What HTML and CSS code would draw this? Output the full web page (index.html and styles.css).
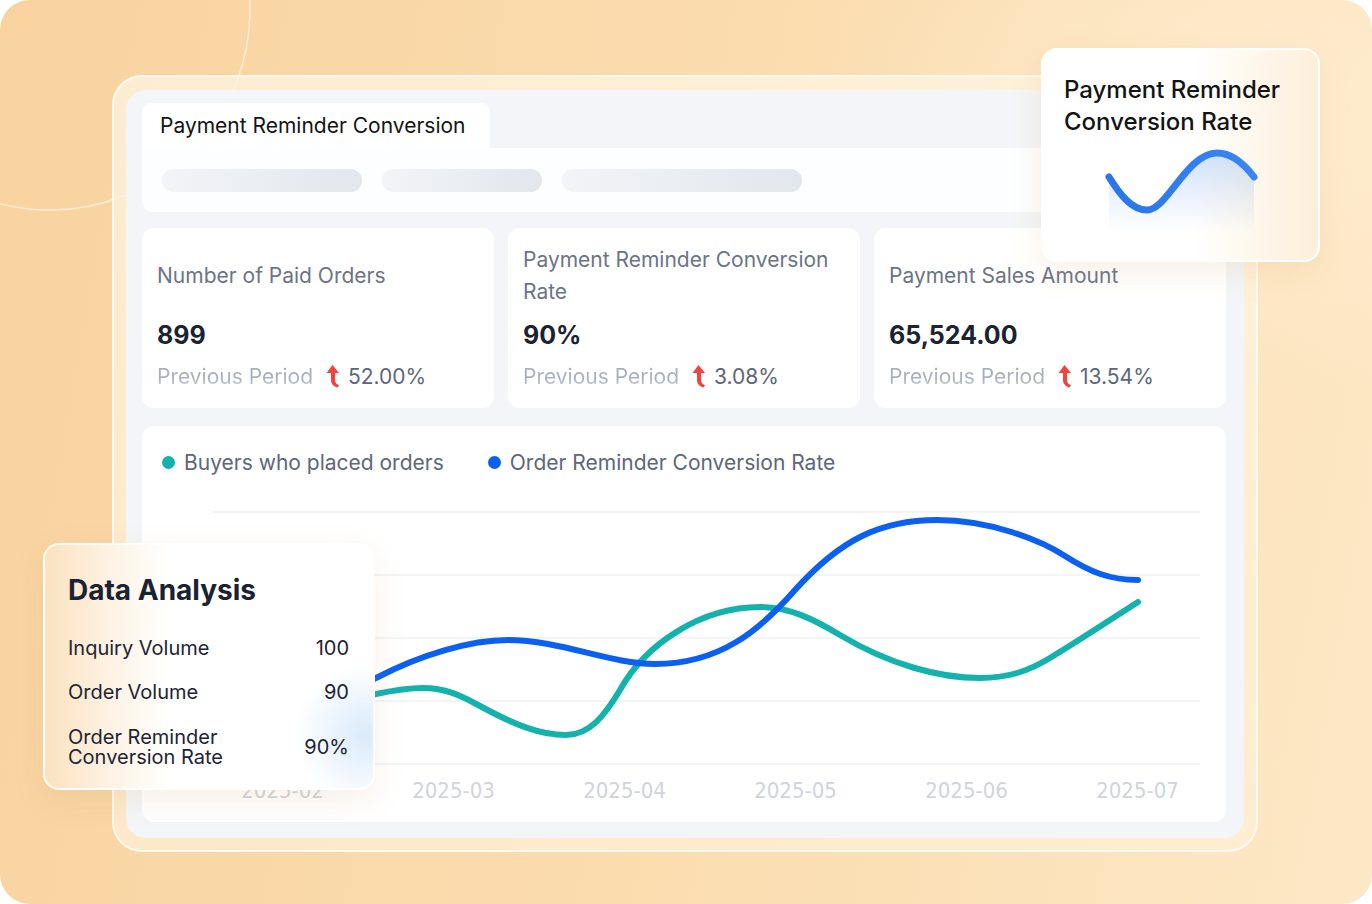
FILE: index.html
```html
<!DOCTYPE html>
<html lang="en">
<head>
<meta charset="utf-8">
<title>Payment Reminder Conversion</title>
<link rel="stylesheet" href="styles.css">
</head>
<body>
<div class="stage">
  <svg class="deco" width="1372" height="904" viewBox="0 0 1372 904">
    <circle cx="50" cy="10" r="200" fill="none" stroke="rgba(255,255,255,0.55)" stroke-width="1.5"/>
  </svg>

  <div class="frame">
    <div class="panel">
      <div class="tab">Payment Reminder Conversion</div>
      <div class="filters">
        <span class="pill pill-a"></span>
        <span class="pill pill-b"></span>
        <span class="pill pill-c"></span>
      </div>

      <div class="stats">
        <div class="stat">
          <div class="stat-title">Number of Paid Orders</div>
          <div class="stat-value">899</div>
          <div class="stat-prev">
            <span class="prev-label">Previous Period</span>
            <svg class="up" width="16" height="24" viewBox="0 0 16 24"><path d="M7.5 1 L14 9 L10 9 L10 16 C10 18.5 11.5 20 14 21.5 L12.5 23.5 C8 22 6 19.5 6 16 L6 9 L1.5 9 Z" fill="#f2443f"/></svg>
            <span class="prev-pct">52.00%</span>
          </div>
        </div>
        <div class="stat">
          <div class="stat-title">Payment Reminder Conversion Rate</div>
          <div class="stat-value">90%</div>
          <div class="stat-prev">
            <span class="prev-label">Previous Period</span>
            <svg class="up" width="16" height="24" viewBox="0 0 16 24"><path d="M7.5 1 L14 9 L10 9 L10 16 C10 18.5 11.5 20 14 21.5 L12.5 23.5 C8 22 6 19.5 6 16 L6 9 L1.5 9 Z" fill="#f2443f"/></svg>
            <span class="prev-pct">3.08%</span>
          </div>
        </div>
        <div class="stat">
          <div class="stat-title">Payment Sales Amount</div>
          <div class="stat-value">65,524.00</div>
          <div class="stat-prev">
            <span class="prev-label">Previous Period</span>
            <svg class="up" width="16" height="24" viewBox="0 0 16 24"><path d="M7.5 1 L14 9 L10 9 L10 16 C10 18.5 11.5 20 14 21.5 L12.5 23.5 C8 22 6 19.5 6 16 L6 9 L1.5 9 Z" fill="#f2443f"/></svg>
            <span class="prev-pct">13.54%</span>
          </div>
        </div>
      </div>

      <div class="chart-card">
        <div class="legend">
          <span class="legend-item"><i class="dot dot-teal"></i>Buyers who placed orders</span>
          <span class="legend-item"><i class="dot dot-blue"></i>Order Reminder Conversion Rate</span>
        </div>
        <svg class="plot" width="1084" height="272" viewBox="142 500 1084 272">
          <g stroke="#eef1f5" stroke-width="1.5">
            <line x1="212" y1="512" x2="1200" y2="512"/>
            <line x1="212" y1="575" x2="1200" y2="575"/>
            <line x1="212" y1="638" x2="1200" y2="638"/>
            <line x1="212" y1="701" x2="1200" y2="701"/>
            <line x1="212" y1="764" x2="1200" y2="764"/>
          </g>
          <path d="M300,712 C330,705 355,698 376,694 C395,690 408,688 423,688 C445,688 460,695 480,706 C515,725 540,735 566,735 C590,735 605,715 620,690 C645,645 700,607 760,607 C790,607 815,620 840,635 C890,665 940,678 980,678 C1010,678 1030,670 1050,658 C1080,640 1110,620 1138,602" fill="none" stroke="#13b2ad" stroke-width="6" stroke-linecap="round"/>
          <path d="M283,715 C320,705 350,693 376,678 C420,655 470,640 508,640 C560,640 610,664 655,664 C720,664 760,630 795,590 C840,540 880,520 937,520 C990,520 1040,540 1065,556 C1090,572 1110,580 1138,580" fill="none" stroke="#0b60f2" stroke-width="6" stroke-linecap="round"/>
        </svg>
        <div class="xaxis">
          <span>2025-02</span><span>2025-03</span><span>2025-04</span><span>2025-05</span><span>2025-06</span><span>2025-07</span>
        </div>
      </div>
    </div>
  </div>

  <div class="float-rate">
    <div class="rate-title">Payment Reminder Conversion Rate</div>
    <svg class="wave" width="162" height="84" viewBox="0 0 162 84">
      <defs>
        <linearGradient id="waveFill" x1="0" y1="0" x2="0" y2="1">
          <stop offset="0" stop-color="#2f7bf0" stop-opacity="0.22"/>
          <stop offset="1" stop-color="#2f7bf0" stop-opacity="0"/>
        </linearGradient>
        <linearGradient id="waveStroke" x1="0" y1="0" x2="1" y2="0">
          <stop offset="0" stop-color="#2a74ec"/>
          <stop offset="1" stop-color="#3a86f2"/>
        </linearGradient>
      </defs>
      <path d="M8,29 C18,45 30,62 46,62 C66,62 86,5 116,5 C132,5 144,17 153,29 L153,84 L8,84 Z" fill="url(#waveFill)"/>
      <path d="M8,29 C18,45 30,62 46,62 C66,62 86,5 116,5 C132,5 144,17 153,29" fill="none" stroke="url(#waveStroke)" stroke-width="7" stroke-linecap="round"/>
    </svg>
  </div>

  <div class="float-analysis">
    <div class="fa-title">Data Analysis</div>
    <div class="fa-row fa-row-first"><span>Inquiry Volume</span><span>100</span></div>
    <div class="fa-row"><span>Order Volume</span><span>90</span></div>
    <div class="fa-row fa-row-last"><span>Order Reminder<br>Conversion Rate</span><span>90%</span></div>
  </div>
</div>
</body>
</html>
```

FILE: styles.css
```css
* { box-sizing: border-box; }
html, body { margin: 0; padding: 0; background: #ffffff; }
body { font-family: Inter, "Noto Sans", "Liberation Sans", sans-serif; }

.stage {
  position: relative;
  width: 1372px;
  height: 904px;
  border-radius: 30px;
  overflow: hidden;
  padding: 75px 0 0 112px;
  background:
    radial-gradient(ellipse 600px 400px at 1250px 120px, rgba(255,240,214,0.7), rgba(255,240,214,0) 70%),
    linear-gradient(100deg, #f8d39f 0%, #fad9aa 35%, #fbdfb4 65%, #fde8c6 100%);
}

.deco { position: absolute; left: 0; top: 0; pointer-events: none; }

.frame {
  position: relative;
  width: 1146px;
  height: 777px;
  border-radius: 30px;
  border: 2px solid rgba(255,255,255,0.75);
  background: linear-gradient(180deg, rgba(255,244,226,0.75), rgba(255,240,216,0.7));
  padding: 13px 12px;
}

.panel {
  width: 1118px;
  height: 748px;
  border-radius: 20px;
  background: #f3f5f8;
  padding: 13px 18px 16px 16px;
}

.tab {
  width: 348px;
  height: 45px;
  background: #ffffff;
  border-radius: 10px 10px 0 0;
  padding-left: 18px;
  display: flex;
  align-items: center;
  font-size: 21px;
  color: #141414;
}

.filters {
  height: 64px;
  background: #fdfeff;
  border-radius: 0 10px 10px 10px;
  display: flex;
  align-items: center;
  gap: 20px;
  padding-left: 20px;
}
.pill {
  height: 23px;
  border-radius: 12px;
  background: linear-gradient(90deg, #f2f4f7 0%, #e2e6ed 100%);
}
.pill-a { width: 200px; }
.pill-b { width: 160px; }
.pill-c { width: 240px; }

.stats {
  margin-top: 16px;
  display: grid;
  grid-template-columns: repeat(3, 1fr);
  gap: 14px;
  height: 180px;
}
.stat {
  background: #ffffff;
  border-radius: 12px;
  padding: 16px 15px;
}
.stat-title {
  height: 64px;
  display: flex;
  align-items: center;
  font-size: 21px;
  line-height: 32px;
  color: #6b7487;
}
.stat-value {
  margin-top: 11px;
  font-size: 25px;
  line-height: 32px;
  font-weight: 700;
  color: #1b2232;
}
.stat-prev {
  margin-top: 9px;
  height: 32px;
  display: flex;
  align-items: center;
  font-size: 21px;
}
.prev-label {
  margin-right: 12px;
  background: linear-gradient(180deg, #a9b0bd 60%, #d4d8df 100%);
  -webkit-background-clip: text;
  background-clip: text;
  color: transparent;
}
.up { margin-right: 7px; }
.prev-pct { color: #5e6679; }

.chart-card {
  margin-top: 18px;
  height: 396px;
  background: #ffffff;
  border-radius: 12px;
  padding-top: 20px;
}
.legend {
  display: flex;
  align-items: center;
  gap: 44px;
  padding-left: 20px;
  height: 32px;
  font-size: 21px;
  color: #5e6679;
}
.legend-item { display: flex; align-items: center; }
.dot {
  display: inline-block;
  width: 13px;
  height: 13px;
  border-radius: 50%;
  margin-right: 9px;
}
.dot-teal { background: #13b2ad; }
.dot-blue { background: #0b60f2; }

.plot { display: block; margin-top: 22px; }

.xaxis {
  display: grid;
  grid-template-columns: repeat(6, 171px);
  padding-left: 55px;
  height: 36px;
  align-items: center;
  font-family: "DejaVu Sans Condensed", "DejaVu Sans", sans-serif;
  font-stretch: condensed;
  font-size: 22px;
  color: #d0d4db;
}
.xaxis span { text-align: center; }

.float-rate {
  position: absolute;
  left: 1041px;
  top: 48px;
  width: 279px;
  height: 214px;
  border-radius: 16px;
  border: 2px solid rgba(255,255,255,0.9);
  background: linear-gradient(90deg, #ffffff 0%, #ffffff 55%, #fef6ea 80%, #fdeeda 100%);
  box-shadow: 0 10px 30px rgba(214,160,90,0.16);
  padding: 24px 20px 0 21px;
}
.rate-title {
  font-size: 24px;
  line-height: 32px;
  font-weight: 500;
  color: #141414;
}
.wave { display: block; margin: 10px 0 0 37px; }

.float-analysis {
  position: absolute;
  left: 43px;
  top: 543px;
  width: 332px;
  height: 247px;
  border-radius: 16px;
  border: 2px solid rgba(255,255,255,0.9);
  background:
    radial-gradient(circle 70px at 320px 190px, rgba(150,195,240,0.35), rgba(150,195,240,0) 100%),
    linear-gradient(90deg, #fbe2c0 0%, #fdf1e1 18%, #ffffff 38%, #ffffff 100%);
  box-shadow: 0 10px 30px rgba(200,150,90,0.14);
  padding: 27px 24px 0 23px;
  color: #1e2433;
}
.fa-title {
  font-size: 28px;
  line-height: 36px;
  font-weight: 700;
  color: #1b2232;
}
.fa-row {
  display: flex;
  justify-content: space-between;
  align-items: center;
  font-size: 20px;
  line-height: 28px;
  margin-top: 16px;
}
.fa-row-first { margin-top: 26px; }
.fa-row-last { line-height: 20px; margin-top: 21px; }
```
